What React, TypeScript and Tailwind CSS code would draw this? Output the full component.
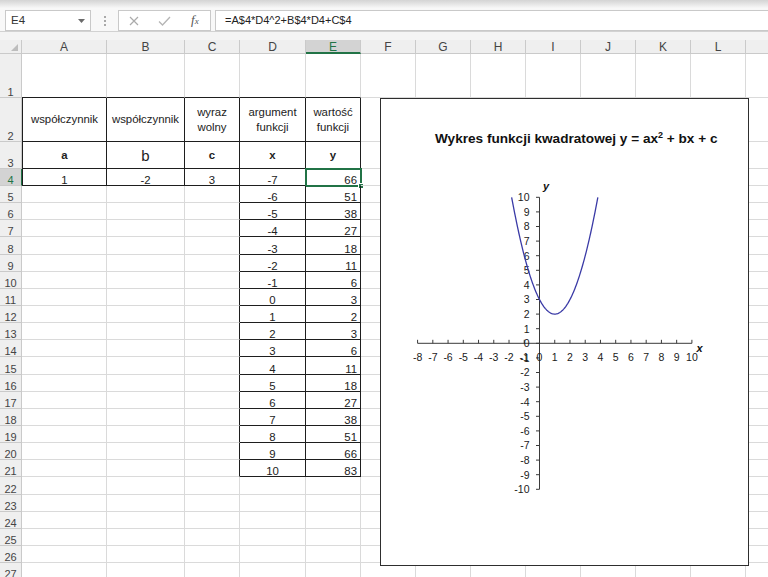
import React from "react";

type Col = { l: string; w: string };
const COLS: Col[] = [
  { l: "A", w: "w-[85px]" },
  { l: "B", w: "w-[78px]" },
  { l: "C", w: "w-[55px]" },
  { l: "D", w: "w-[66px]" },
  { l: "E", w: "w-[55px]" },
  { l: "F", w: "w-[55px]" },
  { l: "G", w: "w-[55px]" },
  { l: "H", w: "w-[55px]" },
  { l: "I", w: "w-[55px]" },
  { l: "J", w: "w-[55px]" },
  { l: "K", w: "w-[55px]" },
  { l: "L", w: "w-[55px]" },
  { l: "", w: "w-[55px]" },
];

const ROWS: { n: number; h: string }[] = [
  { n: 1, h: "h-[44px]" },
  { n: 2, h: "h-[44px]" },
  { n: 3, h: "h-[27px]" },
  { n: 4, h: "h-[17px]" },
  ...Array.from({ length: 23 }, (_, i) => ({ n: i + 5, h: "h-[17.15px]" })),
];

const f = (x: number) => x * x - 2 * x + 3;

function CellContent({ r, c }: { r: number; c: number }) {
  if (r === 2 && c <= 4) {
    const labels: React.ReactNode[] = [
      "współczynnik",
      "współczynnik",
      <>wyraz<br />wolny</>,
      <>argument<br />funkcji</>,
      <>wartość<br />funkcji</>,
    ];
    return (
      <div className="flex h-full w-full items-center justify-center text-center text-[11.4px] leading-[14.4px] text-[#222]">
        <span>{labels[c]}</span>
      </div>
    );
  }
  if (r === 3 && c <= 4) {
    const l = ["a", "b", "c", "x", "y"][c];
    return (
      <div className="flex h-full w-full items-center justify-center text-[#222]">
        {c === 1 ? (
          <span className="text-[15px] leading-[15px] font-normal">b</span>
        ) : (
          <span className="text-[11.4px] font-bold leading-[14px]">{l}</span>
        )}
      </div>
    );
  }
  if (r === 4 && c <= 2) {
    const v = ["1", "-2", "3"][c];
    return (
      <div className="flex h-full w-full items-end justify-center text-[11.4px] leading-[10px] text-[#222]">
        {v}
      </div>
    );
  }
  if (r >= 4 && r <= 21 && c === 3) {
    return (
      <div className="flex h-full w-full items-end justify-center text-[11.4px] leading-[10px] text-[#222]">
        {String(r - 11)}
      </div>
    );
  }
  if (r >= 4 && r <= 21 && c === 4) {
    return (
      <div className="flex h-full w-full items-end justify-end pr-[3px] text-[11.4px] leading-[10px] text-[#222]">
        {String(f(r - 11))}
      </div>
    );
  }
  return null;
}

function Cell({ r, c, col }: { r: number; c: number; col: Col }) {
  const inTop = r >= 2 && r <= 4 && c <= 4;
  const inList = r >= 5 && r <= 21 && (c === 3 || c === 4);
  const bottomBlack = (r === 1 && c <= 4) || inTop || inList;
  const rightBlack = inTop || (r >= 5 && r <= 21 && c >= 2 && c <= 4);
  const leftBlack = inTop && c === 0;
  return (
    <div
      className={`relative h-full shrink-0 border-b border-r ${col.w} ${
        bottomBlack ? "border-b-[#1e1e1e]" : "border-b-[#dadada]"
      } ${rightBlack ? "border-r-[#1e1e1e]" : "border-r-[#dadada]"} ${
        leftBlack ? "border-l border-l-[#1e1e1e]" : ""
      }`}
    >
      <CellContent r={r} c={c} />
      {r === 4 && c === 4 && (
        <div className="absolute -left-[1px] -top-[1px] h-[19px] w-[57px] border-2 border-[#217346]">
          <div className="absolute -bottom-[4px] -right-[4px] h-[6px] w-[6px] border border-white bg-[#217346]" />
        </div>
      )}
    </div>
  );
}

function FormulaBar() {
  return (
    <div>
      <div className="h-[8px] bg-gradient-to-b from-[#d4d4d4] to-[#f7f7f7]" />
      <div className="flex h-[24px] items-start border-b border-[#d2d2d2] bg-[#f8f8f8] pt-[2px]">
        <div className="ml-[5px] flex h-[21px] w-[86px] shrink-0 items-center justify-between border border-[#c9c9c9] bg-white pl-[5px] pr-[5px]">
          <span className="text-[11.5px] text-[#333]">E4</span>
          <svg width="7" height="4" viewBox="0 0 7 4">
            <path d="M0 0 L7 0 L3.5 4 Z" fill="#6b6b6b" />
          </svg>
        </div>
        <div className="flex h-[21px] w-[27px] shrink-0 flex-col items-center justify-center gap-[2px]">
          <div className="h-[2px] w-[2px] bg-[#a9a9a9]" />
          <div className="h-[2px] w-[2px] bg-[#a9a9a9]" />
          <div className="h-[2px] w-[2px] bg-[#a9a9a9]" />
        </div>
        <div className="flex h-[21px] w-[93px] shrink-0 items-center border border-[#c9c9c9] bg-white">
          <div className="flex w-[31px] justify-center">
            <svg width="10" height="10" viewBox="0 0 10 10">
              <path d="M1 1 L9 9 M9 1 L1 9" stroke="#ababab" strokeWidth="1.2" fill="none" />
            </svg>
          </div>
          <div className="flex w-[31px] justify-center">
            <svg width="13" height="10" viewBox="0 0 13 10">
              <path d="M1 5.5 L4.5 9 L12 1" stroke="#b5b5b5" strokeWidth="1.3" fill="none" />
            </svg>
          </div>
          <div className="flex w-[31px] justify-center">
            <span className="font-['Liberation_Serif',serif] text-[13px] italic leading-[13px] text-[#555]">
              f<span className="text-[9px]">x</span>
            </span>
          </div>
        </div>
        <div className="ml-[4px] flex h-[21px] w-[600px] shrink-0 items-center border border-[#c9c9c9] bg-white pl-[9px]">
          <span className="text-[11px] text-[#222]">=A$4*D4^2+B$4*D4+C$4</span>
        </div>
      </div>
      <div className="h-[8px] bg-[#f4f4f4]" />
    </div>
  );
}

function ColumnHeader() {
  return (
    <div className="flex h-[14px] bg-[#efefef]">
      <div className="relative h-full w-[22px] shrink-0 border-b border-r border-[#cacaca]">
        <svg className="absolute bottom-[2px] right-[3px]" width="7" height="7" viewBox="0 0 7 7">
          <path d="M7 0 L7 7 L0 7 Z" fill="#bdbdbd" />
        </svg>
      </div>
      {COLS.map((col, i) =>
        col.l === "E" ? (
          <div
            key={i}
            className={`flex h-full shrink-0 items-end justify-center border-b-2 border-r border-b-[#217346] border-r-[#cacaca] bg-[#d3d3d3] text-[12px] leading-[10px] text-[#217346] ${col.w}`}
          >
            {col.l}
          </div>
        ) : (
          <div
            key={i}
            className={`flex h-full shrink-0 items-end justify-center border-b border-r border-[#cacaca] pb-[1px] text-[12px] leading-[10px] text-[#444] ${col.w}`}
          >
            {col.l}
          </div>
        )
      )}
    </div>
  );
}

function Chart() {
  const X0 = 158.5;
  const Y0 = 244.3;
  const UX = 15.24;
  const UY = 14.6;
  const px = (x: number) => X0 + x * UX;
  const py = (y: number) => Y0 - y * UY;
  const xs: number[] = [];
  for (let i = -8; i <= 10; i++) xs.push(i);
  const ys: number[] = [];
  for (let j = -10; j <= 10; j++) ys.push(j);
  const a = 1 - Math.sqrt(8);
  const b = 1 + Math.sqrt(8);
  const pts: string[] = [];
  for (let k = 0; k <= 120; k++) {
    const x = a + ((b - a) * k) / 120;
    pts.push(`${px(x).toFixed(2)},${py(f(x)).toFixed(2)}`);
  }
  const ff = "Liberation Sans, Arial, sans-serif";
  return (
    <div className="absolute left-[380px] top-[98px] h-[468px] w-[369px] border border-[#2e2e2e] bg-white">
      <svg width="367" height="466" viewBox="0 0 367 466" fontFamily={ff}>
        <text x="54" y="44.3" fontSize="13.6" fontWeight="bold" fill="#111">
          Wykres funkcji kwadratowej y = ax
          <tspan fontSize="9" dy="-5">2</tspan>
          <tspan dy="5"> + bx + c</tspan>
        </text>
        <line x1={px(-8)} y1={Y0} x2={px(10)} y2={Y0} stroke="#3a3a3a" strokeWidth="1" />
        <line x1={X0} y1={py(10)} x2={X0} y2={py(-10)} stroke="#3a3a3a" strokeWidth="1" />
        {xs.map((x) => (
          <line key={`tx${x}`} x1={px(x)} y1={Y0} x2={px(x)} y2={Y0 - 3.5} stroke="#3a3a3a" strokeWidth="1" />
        ))}
        {ys.map((y) => (
          <line key={`ty${y}`} x1={X0 - 3.5} y1={py(y)} x2={X0} y2={py(y)} stroke="#3a3a3a" strokeWidth="1" />
        ))}
        {xs.map((x) => (
          <text key={`lx${x}`} x={px(x)} y={Y0 + 17.5} fontSize="10.5" textAnchor="middle" fill="#1a1a1a">
            {x}
          </text>
        ))}
        {ys.map((y) => (
          <text key={`ly${y}`} x={X0 - 10} y={py(y) + 3.8} fontSize="10.5" textAnchor="end" fill="#1a1a1a">
            {y}
          </text>
        ))}
        <text x="162" y="90.5" fontSize="11" fontWeight="bold" fontStyle="italic" fill="#111">
          y
        </text>
        <text x="315.5" y="252.7" fontSize="11" fontWeight="bold" fontStyle="italic" fill="#111">
          x
        </text>
        <polyline points={pts.join(" ")} fill="none" stroke="#3a3aa6" strokeWidth="1.3" />
      </svg>
    </div>
  );
}

export default function App() {
  return (
    <div className="relative h-[577px] w-[768px] overflow-hidden bg-white font-['Liberation_Sans',Arial,sans-serif]">
      <FormulaBar />
      <ColumnHeader />
      <div className="flex flex-col">
        {ROWS.map((row) => (
          <div key={row.n} className={`flex shrink-0 ${row.h}`}>
            {row.n === 4 ? (
              <div className="flex h-full w-[22px] shrink-0 items-end justify-center border-b border-r border-b-[#cacaca] border-r-[#217346] bg-[#d3d3d3] text-[11px] leading-[10px] text-[#217346]">
                {row.n}
              </div>
            ) : (
              <div className="flex h-full w-[22px] shrink-0 items-end justify-center border-b border-r border-[#cacaca] bg-[#efefef] text-[11px] leading-[10px] text-[#444]">
                {row.n}
              </div>
            )}
            {COLS.map((col, c) => (
              <Cell key={c} r={row.n} c={c} col={col} />
            ))}
          </div>
        ))}
      </div>
      <Chart />
    </div>
  );
}
